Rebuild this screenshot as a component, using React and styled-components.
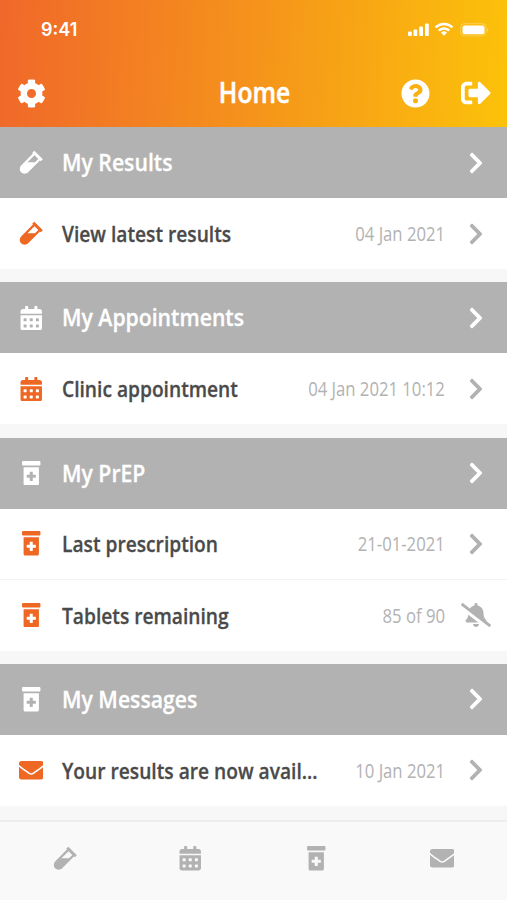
import React from "react";
import styled, { createGlobalStyle } from "styled-components";
import {
  FaBellSlash,
  FaCalendarAlt,
  FaChevronRight,
  FaCog,
  FaEnvelope,
  FaPrescriptionBottleAlt,
  FaQuestionCircle,
  FaSignOutAlt,
  FaVial,
} from "react-icons/fa";

const sections = [
  {
    title: "My Results",
    icon: FaVial,
    rows: [{ label: "View latest results", info: "04 Jan 2021", icon: FaVial }],
  },
  {
    title: "My Appointments",
    icon: FaCalendarAlt,
    rows: [
      {
        label: "Clinic appointment",
        info: "04 Jan 2021 10:12",
        icon: FaCalendarAlt,
      },
    ],
  },
  {
    title: "My PrEP",
    icon: FaPrescriptionBottleAlt,
    rows: [
      {
        label: "Last prescription",
        info: "21-01-2021",
        icon: FaPrescriptionBottleAlt,
      },
      {
        label: "Tablets remaining",
        info: "85 of 90",
        icon: FaPrescriptionBottleAlt,
        muted: true,
      },
    ],
  },
  {
    title: "My Messages",
    icon: FaPrescriptionBottleAlt,
    rows: [
      {
        label: "Your results are now avail...",
        info: "10 Jan 2021",
        icon: FaEnvelope,
      },
    ],
  },
];

const tabs = [FaVial, FaCalendarAlt, FaPrescriptionBottleAlt, FaEnvelope];

const StatusIcons = () => (
  <svg width="82" height="16" viewBox="0 0 82 16" fill="#fff">
    <rect x="1" y="9.5" width="3.8" height="4.5" rx="1" />
    <rect x="6.5" y="7.5" width="3.8" height="6.5" rx="1" />
    <rect x="12.2" y="4.5" width="3.8" height="9.5" rx="1" />
    <rect x="18" y="1.5" width="3.8" height="12.5" rx="1" />
    <g fill="none" stroke="#fff" strokeWidth="2.6">
      <path d="M28.6 5.4a12 12 0 0 1 16.8 0" />
      <path d="M31.8 8.7a7.4 7.4 0 0 1 10.4 0" />
    </g>
    <path d="M37 13.8l-3-3a4.3 4.3 0 0 1 6 0z" />
    <rect
      x="53.7"
      y="1.7"
      width="25.4"
      height="12.2"
      rx="3.6"
      fill="none"
      stroke="#fff"
      strokeOpacity="0.3"
    />
    <rect x="55.5" y="3.4" width="22" height="8.8" rx="2" />
    <path d="M80.3 6v4c1.2-.6 1.2-3.4 0-4z" fillOpacity="0.4" />
  </svg>
);

const App = () => {
  return (
    <>
      <GlobalStyle />
      <Screen>
        <Header>
          <StatusBar>
            <Time>9:41</Time>
            <StatusIcons />
          </StatusBar>
          <NavBar>
            <NavButton aria-label="settings">
              <FaCog size={29} />
            </NavButton>
            <Title>Home</Title>
            <NavActions>
              <NavButton aria-label="help">
                <FaQuestionCircle size={29} />
              </NavButton>
              <NavButton aria-label="sign out">
                <FaSignOutAlt size={30} />
              </NavButton>
            </NavActions>
          </NavBar>
        </Header>
        <Sections>
          {sections.map((section) => {
            const SectionIcon = section.icon;
            return (
              <section key={section.title}>
                <SectionHeader>
                  <IconCell>
                    <SectionIcon size={24.5} />
                  </IconCell>
                  <SectionTitle>{section.title}</SectionTitle>
                  <ActionCell>
                    <FaChevronRight size={24} />
                  </ActionCell>
                </SectionHeader>
                {section.rows.map((row) => {
                  const RowIcon = row.icon;
                  return (
                    <Row key={row.label}>
                      <IconCell $color="#ee6723">
                        <RowIcon size={24.5} />
                      </IconCell>
                      <Label>{row.label}</Label>
                      <Info>{row.info}</Info>
                      <ActionCell $color="#b2b2b2">
                        {row.muted ? (
                          <FaBellSlash size={30} />
                        ) : (
                          <FaChevronRight size={24} />
                        )}
                      </ActionCell>
                    </Row>
                  );
                })}
              </section>
            );
          })}
        </Sections>
        <TabBar>
          {tabs.map((TabIcon, i) => (
            <Tab key={i}>
              <TabIcon size={24.5} />
            </Tab>
          ))}
        </TabBar>
      </Screen>
    </>
  );
};

const GlobalStyle = createGlobalStyle`
  * {
    box-sizing: border-box;
  }
  body {
    margin: 0;
    font-family: "Open Sans", "Noto Sans", sans-serif;
  }
  svg {
    display: block;
  }
`;

const Screen = styled.div`
  width: 507px;
  height: 900px;
  display: flex;
  flex-direction: column;
  overflow: hidden;
  background-color: #f7f7f7;
`;

const Header = styled.header`
  height: 127px;
  flex-shrink: 0;
  color: #fff;
  background: linear-gradient(93deg, #f0682a 0%, #f5931b 50%, #fcc20a 100%);
`;

const StatusBar = styled.div`
  height: 59px;
  display: flex;
  align-items: center;
  justify-content: space-between;
  padding: 0 18px 0 41px;
`;

const Time = styled.div`
  font-family: "Inter", sans-serif;
  font-size: 18px;
  font-weight: 600;
`;

const NavBar = styled.div`
  height: 68px;
  display: grid;
  grid-template-columns: 1fr auto 1fr;
  align-items: center;
  padding: 0 16px 0 17px;
`;

const NavButton = styled.button`
  padding: 0;
  border: none;
  background: none;
  color: inherit;
`;

const NavActions = styled.div`
  display: flex;
  justify-content: flex-end;
  align-items: center;
  gap: 31px;
`;

/* the text is narrowed to get the condensed look of the brand font */
const Title = styled.h1`
  margin: 0;
  padding-bottom: 2px;
  font-size: 28px;
  font-weight: 600;
  line-height: 36px;
  -webkit-text-stroke: 0.5px currentColor;
  transform: scaleX(0.88);
`;

const Sections = styled.main`
  height: 693px;
  flex-shrink: 0;
  display: flex;
  flex-direction: column;
  gap: 13.33px;
`;

const Row = styled.div`
  height: 71px;
  display: flex;
  align-items: center;
  background-color: #fff;
  color: #4a4a4a;

  &:not(:last-child) {
    border-bottom: 1px solid #f3f3f3;
  }
`;

const SectionHeader = styled(Row)`
  background-color: #b2b2b2;
  color: #fff;

  &:not(:last-child) {
    border-bottom: none;
  }
`;

const IconCell = styled.div`
  width: 62px;
  flex-shrink: 0;
  display: flex;
  justify-content: center;
  color: ${(props) => props.$color || "inherit"};
`;

const ActionCell = styled(IconCell)``;

const SectionTitle = styled.h2`
  flex: 1;
  min-width: 0;
  margin: 0;
  padding-bottom: 2px;
  font-size: 24px;
  font-weight: 600;
  white-space: nowrap;
  -webkit-text-stroke: 0.3px currentColor;
  transform: scaleX(0.883);
  transform-origin: left;
`;

const Label = styled.div`
  flex: 1;
  min-width: 0;
  padding-bottom: 1px;
  font-size: 22px;
  font-weight: 600;
  white-space: nowrap;
  -webkit-text-stroke: 0.3px currentColor;
  transform: scaleX(0.872);
  transform-origin: left;
`;

const Info = styled.div`
  font-size: 19.5px;
  color: #b2b2b2;
  white-space: nowrap;
  transform: scaleX(0.855);
  transform-origin: right;
`;

const TabBar = styled.nav`
  flex: 1;
  display: flex;
  padding: 0 2px 5px;
  border-top: 2px solid #ededed;
  background-color: #f9f9f9;
  color: #b2b2b2;
`;

const Tab = styled.div`
  flex: 1;
  display: flex;
  align-items: center;
  justify-content: center;
`;

export default App;
